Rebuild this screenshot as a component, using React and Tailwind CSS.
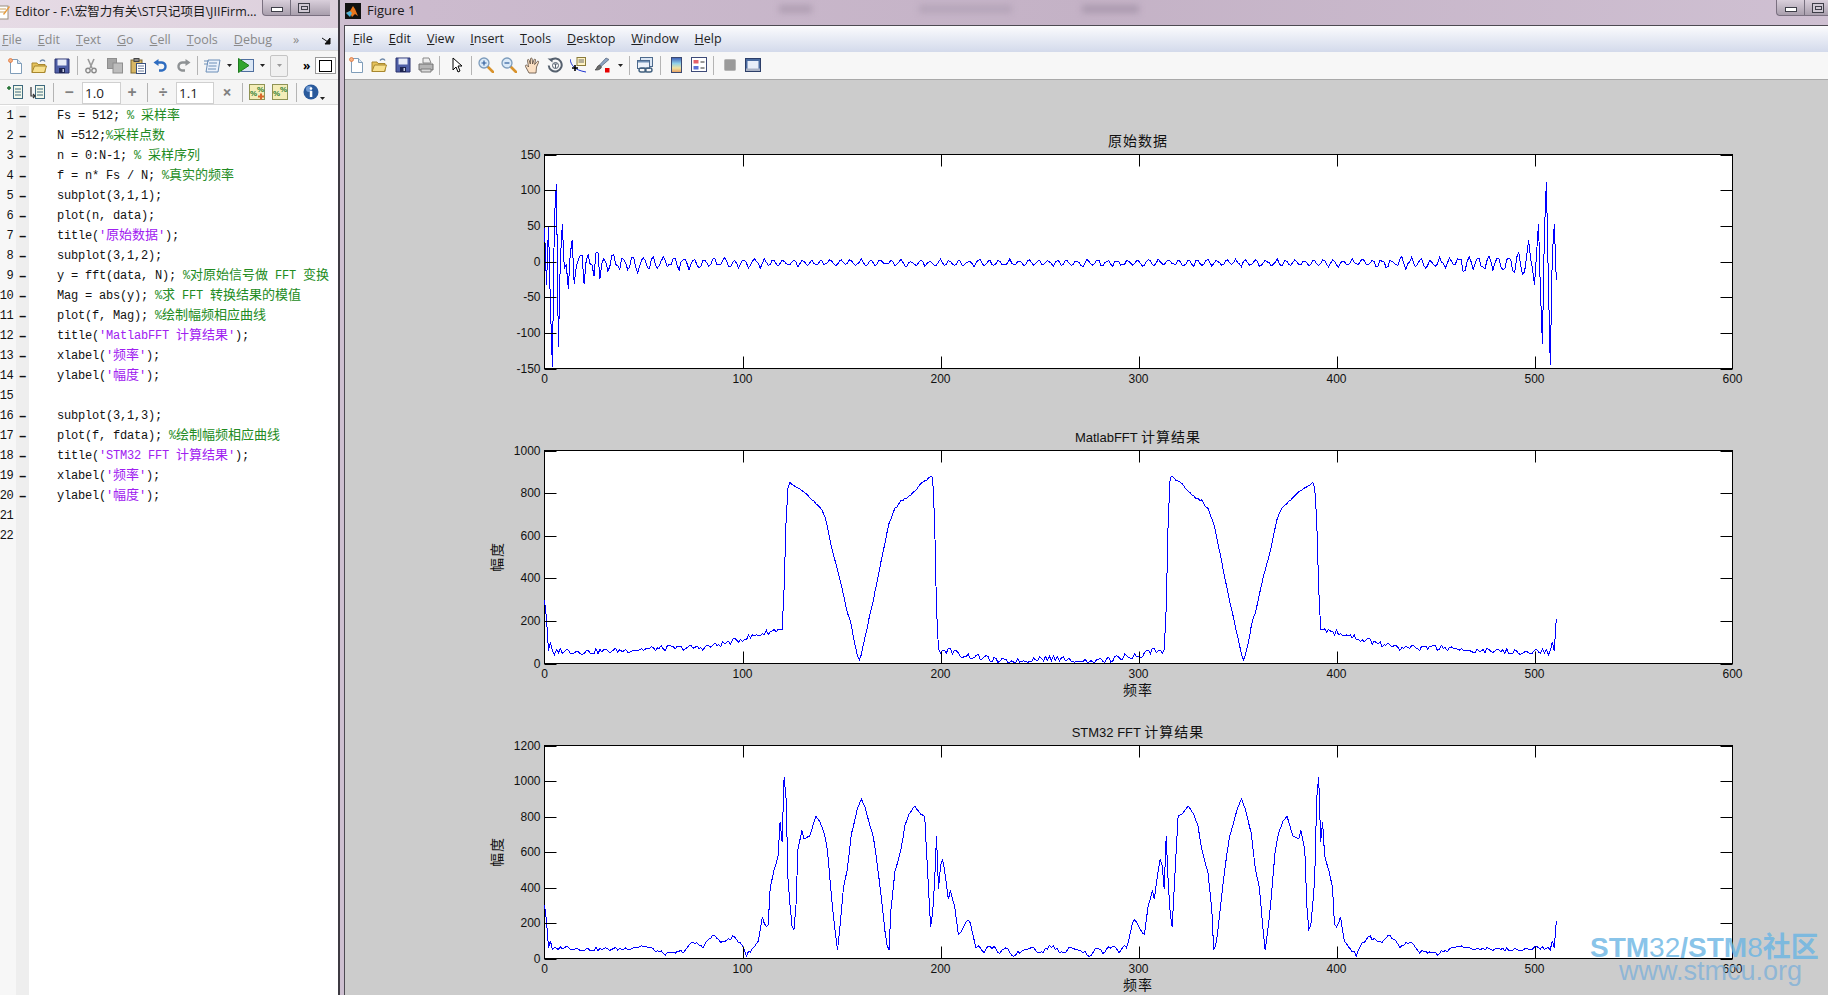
import React from "react";

const mono = "font-['Liberation_Mono','Noto_Sans_CJK_SC',monospace]";
const ui = "font-['Open_Sans','Noto_Sans_CJK_SC',sans-serif]";
const CJK = /([\u4e00-\u9fff]+)/;

// fake but repeatable noise for the curves
function rnd(i, seed) {
  const v = Math.sin(i * 12.9898 + seed * 78.233) * 43758.5453;
  return v - Math.floor(v);
}

function interp(points, i) {
  for (let k = 0; k < points.length - 1; k++) {
    const [a, va] = points[k];
    const [b, vb] = points[k + 1];
    if (i >= a && i <= b) return va + ((vb - va) * (i - a)) / (b - a);
  }
  return points[points.length - 1][1];
}

const matlabPoints = [
  [0, 300], [1, 210], [2, 60], [3, 100], [4, 60], [5, 30], [6, 60], [10, 60], [20, 55], [40, 62],
  [60, 72], [80, 75], [90, 92], [100, 115], [110, 140], [120, 165], [121, 350], [122, 670], [123, 830],
  [124, 845], [130, 810], [135, 770], [140, 720], [142, 680], [145.5, 520], [148.5, 420], [151.5, 300],
  [154.5, 200], [157.5, 50], [158.5, 15], [159.5, 20], [161.5, 120], [163.5, 180], [166.5, 320], [170.5, 500],
  [173.5, 640], [176.5, 720], [180, 765], [185, 790], [190, 840], [195, 880], [196.5, 875], [197, 670],
  [198, 260], [198.5, 60], [205, 62], [210, 40], [220, 30], [230, 10], [240, 10], [250, 25], [256, 22],
];

const stmPoints = [
  [0, 300], [1, 210], [2, 60], [3, 100], [4, 50], [10, 65], [20, 50], [40, 55], [50, 70], [60, 30],
  [62, 25], [70, 40], [75, 90], [80, 70], [85, 130], [90, 90], [95, 120], [100, 80], [102, 20],
  [105, 50], [108, 100], [110, 235], [112, 170], [113, 200], [114, 400], [116, 500], [118, 580],
  [119, 770], [120, 660], [121, 1020], [122, 900], [123, 450], [124, 300], [125, 180], [126, 160],
  [127, 300], [128, 610], [130, 720], [131, 670], [134, 690], [137, 800], [139, 770], [141.5, 700],
  [143, 600], [144.5, 400], [146, 220], [148, 40], [149.5, 200], [151, 400], [153, 510], [155, 700],
  [158, 840], [160, 900], [162, 850], [164, 760], [166, 690], [168.5, 500], [170.5, 300], [172.5, 100],
  [174, 40], [175, 280], [177, 490], [180, 610], [182, 750], [184, 810], [187, 860], [190, 810],
  [192, 800], [193, 600], [194.5, 280], [195, 180], [196.5, 300], [198, 690], [199, 390], [200.5, 590],
  [202.5, 470], [204, 330], [205, 380], [207, 300], [209, 130], [213, 210], [215, 210], [218, 55],
  [220, 70], [222, 30], [225, 75], [230, 30], [234, 60], [236, 15], [246, 70], [250, 30], [256, 70],
];

const dataStart = [47, -33, 50, -60, -148, 60, 108, -120, 0, 52, -10, -5, -38, 10, 30, -32, -8, 2, 8, 8, -32, 0, 10, -3, -5, -20, 12, 12, -25];
const dataEnd = { 497: 30, 498: 5, 499: -10, 500: -33, 501: 10, 502: 53, 503: -40, 504: -115, 505: 40, 506: 112, 507: -30, 508: -145, 509: 10, 510: 52, 511: -26 };

function spectrum(points, noiseSize) {
  const out = [];
  for (let i = 0; i < 512; i++) {
    const d = i <= 256 ? i : 512 - i;
    let v = interp(points, d);
    if (d > 4) v += (rnd(d, 3) - 0.5) * noiseSize * (v < 300 ? 1 : 0.4);
    out.push(Math.max(v, 6));
  }
  return out;
}

function timeSignal() {
  const out = [];
  let phase = 0;
  for (let i = 0; i < 512; i++) {
    phase += (2 * Math.PI) / (4 + rnd(i, 2) * 2);
    if (i < dataStart.length) out.push(dataStart[i]);
    else if (dataEnd[i] !== undefined) out.push(dataEnd[i]);
    else {
      const d = Math.min(i, 512 - i);
      const amp = 4 + 16 * Math.exp(-d / 45);
      out.push(-2 + amp * Math.sin(phase) * (0.5 + rnd(i, 9) * 0.7) + (rnd(i, 7) - 0.5) * amp * 0.7);
    }
  }
  return out;
}

const AX_L = 199.5;
const AX_W = 1188;
const AX_T = 44.5;

function Plot({ boxH, yMin, yMax, yTicks, data, title, xlabel, ylabel, outerH }) {
  const sx = (v) => AX_L + (v / 600) * AX_W;
  const sy = (v) => AX_T + boxH - ((v - yMin) / (yMax - yMin)) * boxH;
  const points = data.map((v, i) => `${sx(i).toFixed(1)},${sy(v).toFixed(1)}`).join(" ");
  const bottom = AX_T + boxH;
  const labelFont = "'Liberation Sans', sans-serif";
  const cjkFont = "'Noto Sans CJK SC', sans-serif";
  return (
    <svg width="1483" height={outerH} className="block shrink-0" style={{ height: outerH }}>
      <rect x={AX_L} y={AX_T} width={AX_W} height={boxH} fill="#fff" stroke="#000" />
      <polyline points={points} fill="none" stroke="#0000ff" strokeWidth="1" shapeRendering="crispEdges" />
      {[100, 200, 300, 400, 500].map((v) => (
        <g key={v} stroke="#000">
          <line x1={Math.round(sx(v)) + 0.5} x2={Math.round(sx(v)) + 0.5} y1={AX_T} y2={AX_T + 12} />
          <line x1={Math.round(sx(v)) + 0.5} x2={Math.round(sx(v)) + 0.5} y1={bottom} y2={bottom - 12} />
        </g>
      ))}
      {yTicks.map((v) => (
        <g key={v} stroke="#000">
          <line x1={AX_L} x2={AX_L + 12} y1={Math.round(sy(v)) + 0.5} y2={Math.round(sy(v)) + 0.5} />
          <line x1={AX_L + AX_W} x2={AX_L + AX_W - 12} y1={Math.round(sy(v)) + 0.5} y2={Math.round(sy(v)) + 0.5} />
        </g>
      ))}
      {[0, 100, 200, 300, 400, 500, 600].map((v) => (
        <text key={v} x={sx(v)} y={bottom + 14} textAnchor="middle" fontSize="12" fill="#111" fontFamily={labelFont}>
          {v}
        </text>
      ))}
      {yTicks.map((v) => (
        <text key={v} x={195.5} y={sy(v) + 4} textAnchor="end" fontSize="12" fill="#111" fontFamily={labelFont}>
          {v}
        </text>
      ))}
      <text x={793} y={AX_T - 9} textAnchor="middle" fill="#111">
        {title
          .split(CJK)
          .filter(Boolean)
          .map((part, i) =>
            CJK.test(part) ? (
              <tspan key={i} fontSize="14" letterSpacing="1" fontFamily={cjkFont}>
                {part}
              </tspan>
            ) : (
              <tspan key={i} fontSize="13" fontFamily={labelFont}>
                {part}
              </tspan>
            ),
          )}
      </text>
      {xlabel && (
        <text x={793} y={bottom + 31} textAnchor="middle" fontSize="14" letterSpacing="1" fill="#111" fontFamily={cjkFont}>
          {xlabel}
        </text>
      )}
      {ylabel && (
        <text
          transform={`translate(157 ${AX_T + boxH / 2}) rotate(-90)`}
          textAnchor="middle"
          fontSize="14"
          letterSpacing="1"
          fill="#111"
          fontFamily={cjkFont}>
          {ylabel}
        </text>
      )}
    </svg>
  );
}

// toolbar drawings
function Doc() {
  return (
    <svg width="16" height="16" viewBox="0 0 16 16">
      <path d="M2.5 1.5h7l4 4v10h-11z" fill="#fff" stroke="#7f9db9" />
      <path d="M9.5 1.5v4h4" fill="#d6e4f2" stroke="#7f9db9" />
      <circle cx="2.5" cy="2.5" r="2" fill="#f4b183" stroke="#e06a2c" strokeWidth="0.7" />
    </svg>
  );
}

function Folder() {
  return (
    <svg width="16" height="16" viewBox="0 0 16 16">
      <path d="M1 5h5l1 1.500h7v8H1z" fill="#e6c25a" stroke="#a8872e" />
      <path d="M1 14.500 3.500 8h12l-2 6.500z" fill="#f7e08e" stroke="#a8872e" />
      <path d="M9 3.500c1.500-2 4-2 5 0" fill="none" stroke="#6d87a8" strokeWidth="1.300" />
    </svg>
  );
}

function Disk() {
  return (
    <svg width="16" height="16" viewBox="0 0 16 16">
      <path d="M1 1h14v14H1z" fill="#4f5fa6" stroke="#2c3570" />
      <rect x="3.500" y="1.500" width="9" height="6" fill="#e8ecf7" />
      <rect x="5" y="10" width="6" height="5" fill="#1d2450" />
      <rect x="8.500" y="11" width="1.500" height="3" fill="#c6cbe0" />
    </svg>
  );
}

function Printer() {
  return (
    <svg width="16" height="16" viewBox="0 0 16 16">
      <path d="M5 1h6l2 5H5z" fill="#eee" stroke="#888" />
      <path d="M1 7h14v6H1z" fill="#b5b5b5" stroke="#707070" />
      <path d="M3 12h10v3H3z" fill="#dcdcdc" stroke="#7a7a7a" />
    </svg>
  );
}

function Cursor() {
  return (
    <svg width="11" height="16" viewBox="0 0 11 16">
      <path d="M1 1v12l3-3 2 5 2-1-2-5h4z" fill="#fff" stroke="#000" />
    </svg>
  );
}

function Zoom({ plus }) {
  return (
    <svg width="16" height="16" viewBox="0 0 16 16">
      <path d="M9.500 9.500 15 15" stroke="#d9932c" strokeWidth="2.600" strokeLinecap="round" />
      <circle cx="6" cy="6" r="5" fill="#dbeaf8" stroke="#7d9cbc" strokeWidth="1.300" />
      <path d={plus ? "M3.500 6h5M6 3.500v5" : "M3.500 6h5"} stroke="#2f5d9b" strokeWidth="1.200" />
    </svg>
  );
}

function Hand() {
  return (
    <svg width="17" height="17" viewBox="0 0 17 17">
      <path
        d="M5 16 1.500 9.500c-.6-1.200.8-2 1.700-1L4.500 10 3.500 3.500c-.2-1.200 1.300-1.500 1.600-.3L6.300 7 6.500 2c0-1.300 1.600-1.300 1.700 0l.4 5L10 2.800c.4-1.200 1.800-.8 1.500.4L10.600 7.500l2.600-3c.8-.9 1.900 0 1.300 1L12.500 10 12 16z"
        fill="#fbe0c4"
        stroke="#5b4a3c"
        strokeWidth="0.800"
      />
    </svg>
  );
}

function Rotate() {
  return (
    <svg width="16" height="16" viewBox="0 0 16 16">
      <path d="M3.500 3.500a6.500 6.500 0 1 1-1.800 5" fill="none" stroke="#55606e" strokeWidth="2" />
      <path d="M0.500 1.500h5v4z" fill="#55606e" />
      <circle cx="8.500" cy="8.500" r="3" fill="none" stroke="#55606e" />
      <path d="M7 7h3M8.500 7v4" stroke="#55606e" />
    </svg>
  );
}

function DataCursor() {
  return (
    <svg width="16" height="16" viewBox="0 0 16 16">
      <rect x="7" y="0.500" width="8.500" height="8" fill="#fff3c4" stroke="#8a7b3b" />
      <path d="M8.500 3h5.500M8.500 5h5.500" stroke="#6a6a6a" />
      <path d="M0 2c1 6 4 11 16 13" fill="none" stroke="#1f35d0" />
      <path d="M5 8v6M2 11h6" stroke="#000" strokeWidth="1.600" />
    </svg>
  );
}

function Brush() {
  return (
    <svg width="16" height="16" viewBox="0 0 16 16">
      <path d="M12 1 15 2.500 7 9.500 5.500 8z" fill="#8fa6c4" stroke="#4f5f77" strokeWidth="0.700" />
      <path d="M5.500 8 7.500 10c-.5 2-3 3.500-6.500 3 2-1 1.500-4 4.500-5z" fill="#6b6b6b" stroke="#333" strokeWidth="0.600" />
      <rect x="11" y="11" width="4.500" height="4.500" fill="#e60000" />
    </svg>
  );
}

function LinkIcon() {
  return (
    <svg width="16" height="16" viewBox="0 0 16 16">
      <rect x="3.500" y="0.500" width="12" height="9" fill="#dce7f4" stroke="#4d6a8d" />
      <rect x="0.500" y="3.500" width="12" height="8" fill="#eef3fa" stroke="#4d6a8d" />
      <path d="M1 4h11v1.500H1z" fill="#6f8fb5" />
      <rect x="2" y="11" width="7" height="4" rx="2" fill="none" stroke="#41607f" strokeWidth="1.400" />
      <rect x="8" y="11" width="7" height="4" rx="2" fill="none" stroke="#41607f" strokeWidth="1.400" />
    </svg>
  );
}

function Colorbar() {
  return (
    <svg width="11" height="16" viewBox="0 0 11 16">
      <defs>
        <linearGradient id="cb" x1="0" y1="0" x2="0" y2="1">
          <stop offset="0" stopColor="#3b5bb5" />
          <stop offset="0.400" stopColor="#8fd0e8" />
          <stop offset="0.700" stopColor="#f1e3a0" />
          <stop offset="1" stopColor="#e59a5c" />
        </linearGradient>
      </defs>
      <rect x="0.500" y="0.500" width="10" height="15" fill="url(#cb)" stroke="#3c4a70" />
    </svg>
  );
}

function Legend() {
  return (
    <svg width="16" height="16" viewBox="0 0 16 16">
      <rect x="0.500" y="0.500" width="15" height="14" fill="#fff" stroke="#3d4a78" />
      <rect x="2.500" y="3" width="5" height="3.500" fill="#e4606a" />
      <rect x="2.500" y="9" width="5" height="3.500" fill="#5a6fd8" />
      <path d="M9.500 5h4M9.500 11h4" stroke="#333" />
    </svg>
  );
}

function GraySquare() {
  return (
    <svg width="12" height="12" viewBox="0 0 12 12">
      <rect x="0.500" y="0.500" width="11" height="11" rx="1" fill="#9a9a9a" stroke="#b5b5b5" />
    </svg>
  );
}

function PlotTools() {
  return (
    <svg width="16" height="16" viewBox="0 0 16 16">
      <rect x="0.500" y="1.500" width="15" height="13" fill="#e8eef8" stroke="#2c3e68" />
      <rect x="1" y="2" width="14" height="2" fill="#4a6ba0" />
      <rect x="1" y="4" width="1.500" height="10" fill="#4a6ba0" />
      <rect x="13.500" y="4" width="1.500" height="10" fill="#4a6ba0" />
      <rect x="1" y="11.500" width="14" height="2.500" fill="#a9b2c5" />
    </svg>
  );
}

function Cut() {
  return (
    <svg width="12" height="16" viewBox="0 0 12 16">
      <path d="M3 1l4 9M9 1 5 10" stroke="#9a9a9a" strokeWidth="1.600" />
      <circle cx="3" cy="12.500" r="2.200" fill="none" stroke="#8a8a8a" strokeWidth="1.400" />
      <circle cx="9" cy="12.500" r="2.200" fill="none" stroke="#8a8a8a" strokeWidth="1.400" />
    </svg>
  );
}

function Copy() {
  return (
    <svg width="16" height="16" viewBox="0 0 16 16">
      <rect x="0.500" y="0.500" width="9" height="10" fill="#a5a5a5" stroke="#8e8e8e" />
      <rect x="6" y="5" width="9.500" height="10" fill="#bdbdbd" stroke="#8e8e8e" />
    </svg>
  );
}

function Paste() {
  return (
    <svg width="16" height="16" viewBox="0 0 16 16">
      <rect x="1" y="2" width="11" height="13" fill="#d8b765" stroke="#7e6a33" />
      <rect x="4" y="0.500" width="5" height="3" fill="#8a8a8a" stroke="#444" />
      <rect x="6.500" y="5.500" width="9" height="10" fill="#fff" stroke="#39507c" />
      <path d="M8 8h6M8 10.500h6M8 13h6" stroke="#6f7f9e" />
    </svg>
  );
}

function Undo() {
  return (
    <svg width="14" height="14" viewBox="0 0 14 14">
      <path d="M4 3.500h4a4 4 0 0 1 1 8H6" fill="none" stroke="#2e6cc0" strokeWidth="2.400" />
      <path d="M5.500 0v7L0.500 3.500z" fill="#2e6cc0" />
    </svg>
  );
}

function Redo() {
  return (
    <svg width="14" height="14" viewBox="0 0 14 14">
      <path d="M10 3.500H6a4 4 0 0 0-1 8h3" fill="none" stroke="#8e9294" strokeWidth="2.400" />
      <path d="M8.500 0v7l5-3.500z" fill="#8e9294" />
    </svg>
  );
}

function Publish() {
  return (
    <svg width="17" height="14" viewBox="0 0 17 14">
      <path d="M4 1h12l-2 12H2z" fill="#eaf1fb" stroke="#6d8fb8" />
      <path d="M5 4h8M4.500 7h8M4 10h8" stroke="#6d8fb8" />
      <path d="M0 2h5M0 5h4" stroke="#6d8fb8" />
    </svg>
  );
}

function Run() {
  return (
    <svg width="16" height="15" viewBox="0 0 16 15">
      <rect x="3.500" y="1.500" width="12" height="12" fill="#dbe7f5" stroke="#4f6f9f" />
      <path d="M0.500 0.500 11 7.500 0.500 14.500z" fill="#2fa52f" stroke="#1f7a1f" />
    </svg>
  );
}

function Caret({ color = "#222" }) {
  return (
    <svg width="5" height="3" viewBox="0 0 5 3">
      <path d="M0 0h5L2.500 3z" fill={color} />
    </svg>
  );
}

function CellInsert({ up }) {
  return (
    <svg width="16" height="16" viewBox="0 0 16 16">
      <rect x="6.500" y="1.500" width="9" height="13" fill="#f3f8ea" stroke="#3f6a7f" />
      <path d="M8 5h6M8 8h6M8 11h6" stroke="#3f6a7f" />
      {up ? (
        <path d="M0 4h4M2 2v4" stroke="#1a6b2a" strokeWidth="1.400" />
      ) : (
        <path d="M2 3v9h3M4 10l2 2-2 2" fill="none" stroke="#333" strokeWidth="1.200" />
      )}
    </svg>
  );
}

function CellPercent({ plus }) {
  return (
    <svg width="16" height="16" viewBox="0 0 16 16">
      <rect x="0.500" y="0.500" width="15" height="15" fill="#f4edb8" stroke="#8f9355" />
      <text x="1" y="12" fontSize="8" fontWeight="700" fill="#2e7d32" fontFamily="'Liberation Sans', sans-serif">%</text>
      <text x="8" y="8" fontSize="8" fontWeight="700" fill="#2e7d32" fontFamily="'Liberation Sans', sans-serif">%</text>
      {plus && <path d="M12 9.500v6M9 12.500h6" stroke="#d8682a" strokeWidth="2" />}
    </svg>
  );
}

function Info() {
  return (
    <svg width="16" height="16" viewBox="0 0 16 16">
      <circle cx="8" cy="8" r="7.500" fill="#2a5a9c" />
      <circle cx="6" cy="5" r="3" fill="#6f9ad3" />
      <circle cx="8" cy="4.500" r="1.300" fill="#fff" />
      <rect x="6.800" y="7" width="2.500" height="6" fill="#fff" />
    </svg>
  );
}

function Sep({ className }) {
  return <div className={`h-[19px] w-px shrink-0 bg-[#b4b4b4] ${className}`} />;
}

function Menu({ items, className, children }) {
  return (
    <div className={`flex items-center ${ui} ${className}`}>
      {items.map(([first, rest], i) => (
        <span key={i}>
          <u>{first}</u>
          {rest}
        </span>
      ))}
      {children}
    </div>
  );
}

function WindowButtons({ className }) {
  return (
    <div className={`flex h-[16px] shrink-0 items-center rounded-bl-[4px] border-b border-l border-[#7a7080] bg-gradient-to-b from-[#d9cfdb] to-[#a99fad] ${className}`}>
      <div className="flex w-[27px] justify-center pt-[3px]">
        <div className="h-[5px] w-[12px] border border-[#3e3e48] bg-white" />
      </div>
      <div className="h-full w-px bg-[#77707f]" />
      <div className="pl-[7px]">
        <div className="flex h-[10px] w-[12px] items-center justify-center border border-[#3e3e48] bg-[#cfc8d3]">
          <div className="h-[4px] w-[7px] border border-[#3e3e48]" />
        </div>
      </div>
    </div>
  );
}

const green = "text-[#228b22]";
const purple = "text-[#a020f0]";

const code = [
  ["Fs = 512; ", ["% 采样率", green]],
  ["N =512;", ["%采样点数", green]],
  ["n = 0:N-1; ", ["% 采样序列", green]],
  ["f = n* Fs / N; ", ["%真实的频率", green]],
  ["subplot(3,1,1);"],
  ["plot(n, data);"],
  ["title(", ["'原始数据'", purple], ");"],
  ["subplot(3,1,2);"],
  ["y = fft(data, N); ", ["%对原始信号做 FFT 变换", green]],
  ["Mag = abs(y); ", ["%求 FFT 转换结果的模值", green]],
  ["plot(f, Mag); ", ["%绘制幅频相应曲线", green]],
  ["title(", ["'MatlabFFT 计算结果'", purple], ");"],
  ["xlabel(", ["'频率'", purple], ");"],
  ["ylabel(", ["'幅度'", purple], ");"],
  null,
  ["subplot(3,1,3);"],
  ["plot(f, fdata); ", ["%绘制幅频相应曲线", green]],
  ["title(", ["'STM32 FFT 计算结果'", purple], ");"],
  ["xlabel(", ["'频率'", purple], ");"],
  ["ylabel(", ["'幅度'", purple], ");"],
  null,
  null,
];

function CodeText({ text }) {
  return text
    .split(CJK)
    .filter(Boolean)
    .map((part, i) =>
      CJK.test(part) ? (
        <span key={i} className="text-[13px] tracking-[0px]">
          {part}
        </span>
      ) : (
        <span key={i}>{part}</span>
      ),
    );
}

function CodeRow({ n, parts }) {
  return (
    <div className={`flex h-[20px] items-center ${mono} text-[12px] tracking-[-0.2px] text-[#111]`}>
      <div className="flex h-full w-[16px] shrink-0 items-center justify-end bg-[#f7f7f7] pr-[3px] tracking-[-0.6px]">{n}</div>
      <div className="flex h-full w-[13px] shrink-0 items-center justify-center bg-[#eeeeee] text-[14px] font-bold">{parts ? "–" : ""}</div>
      <div className="whitespace-pre pl-[28px]">
        {parts &&
          parts.map((p, i) =>
            typeof p === "string" ? (
              <CodeText key={i} text={p} />
            ) : (
              <span key={i} className={p[1]}>
                <CodeText text={p[0]} />
              </span>
            ),
          )}
      </div>
    </div>
  );
}

const symbol = `w-[10px] text-center text-[16px] font-bold leading-none text-[#808080] ${ui}`;
const numberBox = `flex h-[22px] items-center self-end border border-[#d0d0d0] bg-white pl-[2px] text-[13.500px] text-[#222] ${ui}`;

function EditorPanel() {
  return (
    <div className="flex w-[338px] shrink-0 flex-col">
      <div className="flex h-[28px] items-start bg-gradient-to-r from-[#e6dbe5] to-[#dccfdc]">
        <svg width="11" height="18" viewBox="0 0 11 18" className="mt-[3px] shrink-0">
          <rect x="-4" y="3" width="12" height="13" fill="#fff" stroke="#9a8f80" />
          <path d="M-2 6h8M-2 9h8" stroke="#c8a060" />
          <path d="M3 11 9 3l1 1-6 8z" fill="#e89b3c" />
        </svg>
        <div className={`ml-[4px] mt-[3px] w-[240px] shrink-0 whitespace-nowrap text-[12.500px] leading-[18px] text-[#1a1a1a] ${ui}`}>Editor - F:\宏智力有关\ST只记项目\JIIFirm...</div>
        <WindowButtons className="ml-[7px] w-[68px]" />
      </div>
      <Menu
        className="h-[22px] gap-[16px] bg-gradient-to-b from-[#f5f4f7] to-[#d9dfee] pl-[2px] pt-[3px] text-[12.500px] text-[#8a8a8a]"
        items={[
          ["F", "ile"],
          ["E", "dit"],
          ["T", "ext"],
          ["G", "o"],
          ["C", "ell"],
          ["T", "ools"],
          ["D", "ebug"],
        ]}>
        <span className="ml-[5px]">»</span>
        <svg width="9" height="8" viewBox="0 0 9 8" className="ml-[7px]">
          <path d="M0 1l6 4M8 1v6H3z" fill="#111" stroke="#111" strokeWidth="1" />
        </svg>
      </Menu>
      <div className="flex h-[29px] items-center border-t border-[#d9d9d9] bg-[#f5f5f5] pl-[8px] pt-[1px]">
        <Doc />
        <div className="ml-[7px]"><Folder /></div>
        <div className="ml-[7px]"><Disk /></div>
        <Sep className="ml-[7px]" />
        <div className="ml-[7px]"><Cut /></div>
        <div className="ml-[10px]"><Copy /></div>
        <div className="ml-[7px]"><Paste /></div>
        <div className="ml-[7px]"><Undo /></div>
        <div className="ml-[10px]"><Redo /></div>
        <Sep className="ml-[6px]" />
        <div className="ml-[6px]"><Publish /></div>
        <div className="ml-[6px]"><Caret /></div>
        <div className="ml-[6px]"><Run /></div>
        <div className="ml-[6px]"><Caret /></div>
        <div className="ml-[5px] flex h-[22px] w-[18px] items-center justify-center rounded-[2px] border border-[#c4c4c4] bg-[#f0f0f0]">
          <Caret color="#999" />
        </div>
        <div className={`ml-[15px] text-[12px] font-bold leading-none ${ui}`}>»</div>
        <div className="ml-[5px] flex h-[17px] w-[21px] items-center justify-center border border-[#999] bg-white">
          <div className="h-[12px] w-[13px] border border-black" />
        </div>
      </div>
      <div className="flex h-[26px] items-center border-y border-[#d9d9d9] bg-[#f5f5f5] pl-[7px]">
        <CellInsert up />
        <div className="ml-[6px]"><CellInsert /></div>
        <Sep className="ml-[8px]" />
        <div className={`ml-[10px] ${symbol}`}>−</div>
        <div className={`ml-[8px] w-[39px] ${numberBox}`}>1.0</div>
        <div className={`ml-[6px] ${symbol}`}>+</div>
        <Sep className="ml-[10px]" />
        <div className={`ml-[10px] ${symbol}`}>÷</div>
        <div className={`ml-[8px] w-[38px] ${numberBox}`}>1.1</div>
        <div className={`ml-[8px] ${symbol}`}>×</div>
        <Sep className="ml-[10px]" />
        <div className="ml-[6px]"><CellPercent plus /></div>
        <div className="ml-[7px]"><CellPercent /></div>
        <Sep className="ml-[8px]" />
        <div className="ml-[6px]"><Info /></div>
        <div className="ml-[1px] mt-[12px]"><Caret /></div>
      </div>
      <div className="flex flex-1 flex-col bg-white pt-[1px]">
        {code.map((parts, i) => (
          <CodeRow key={i} n={i + 1} parts={parts} />
        ))}
        <div className="flex flex-1">
          <div className="w-[16px] bg-[#f7f7f7]" />
          <div className="w-[13px] bg-[#eeeeee]" />
        </div>
      </div>
    </div>
  );
}

function FigurePanel() {
  const data1 = timeSignal();
  const data2 = spectrum(matlabPoints, 26);
  const data3 = spectrum(stmPoints, 20);
  return (
    <div className="flex min-w-0 flex-1 flex-col">
      <div className="flex h-[25px] items-start bg-gradient-to-r from-[#cdbccf] via-[#c4b2c6] to-[#cfc0d2]">
        <svg width="16" height="16" viewBox="0 0 16 16" className="ml-[1px] mt-[3px] shrink-0">
          <rect width="16" height="16" fill="#111" />
          <path d="M1 10 5 8 8 3l2 3 3 7-3-2-3 3-2-4z" fill="#e8771e" />
          <path d="M1 10 5 8l2 2-2 4z" fill="#4fb3d9" />
        </svg>
        <div className={`ml-[6px] mt-[1px] w-[60px] text-[13px] text-[#1a1a1a] ${ui}`}>Figure 1</div>
        {/* the original title is blurred out in the screenshot */}
        <div className="ml-[352px] mt-[4px] flex h-[10px] w-[385px] items-center blur-[3px]">
          <div className="h-[8px] w-[33px] bg-[#b09fb3]" />
          <div className="ml-[107px] h-[8px] w-[93px] bg-[#b5a5b9]" />
          <div className="ml-[70px] h-[8px] w-[57px] bg-[#ab9aaf]" />
        </div>
        <WindowButtons className="ml-auto w-[52px]" />
      </div>
      <div className="flex flex-1 flex-col overflow-hidden border-l border-t border-[#4d4a52]">
        <Menu
          className="h-[26px] shrink-0 gap-[16px] bg-gradient-to-b from-[#fbfbfd] to-[#d3daeb] pl-[8px] text-[12.500px] text-[#1e1e1e]"
          items={[
            ["F", "ile"],
            ["E", "dit"],
            ["V", "iew"],
            ["I", "nsert"],
            ["T", "ools"],
            ["D", "esktop"],
            ["W", "indow"],
            ["H", "elp"],
          ]}
        />
        <div className="flex h-[28px] shrink-0 items-center border-b border-[#a9a9a9] bg-[#f7f7f7] pb-[1px] pl-[4px]">
          <Doc />
          <div className="ml-[6px]"><Folder /></div>
          <div className="ml-[8px]"><Disk /></div>
          <div className="ml-[7px]"><Printer /></div>
          <Sep className="ml-[5px]" />
          <div className="ml-[12px]"><Cursor /></div>
          <Sep className="ml-[8px]" />
          <div className="ml-[6px]"><Zoom plus /></div>
          <div className="ml-[7px]"><Zoom /></div>
          <div className="ml-[7px]"><Hand /></div>
          <div className="ml-[6px]"><Rotate /></div>
          <div className="ml-[7px]"><DataCursor /></div>
          <div className="ml-[8px]"><Brush /></div>
          <div className="ml-[8px]"><Caret /></div>
          <Sep className="ml-[6px]" />
          <div className="ml-[7px]"><LinkIcon /></div>
          <Sep className="ml-[7px]" />
          <div className="ml-[10px]"><Colorbar /></div>
          <div className="ml-[9px]"><Legend /></div>
          <Sep className="ml-[6px]" />
          <div className="ml-[10px]"><GraySquare /></div>
          <div className="ml-[9px]"><PlotTools /></div>
        </div>
        <div className="flex flex-1 flex-col bg-[#cccccc] pt-[30px]">
          <Plot outerH={296} boxH={214} yMin={-150} yMax={150} yTicks={[-150, -100, -50, 0, 50, 100, 150]} data={data1} title="原始数据" />
          <Plot outerH={295} boxH={213} yMin={0} yMax={1000} yTicks={[0, 200, 400, 600, 800, 1000]} data={data2} title="MatlabFFT 计算结果" xlabel="频率" ylabel="幅度" />
          <Plot outerH={294} boxH={213} yMin={0} yMax={1200} yTicks={[0, 200, 400, 600, 800, 1000, 1200]} data={data3} title="STM32 FFT 计算结果" xlabel="频率" ylabel="幅度" />
        </div>
      </div>
    </div>
  );
}

export default function App() {
  return (
    <div className="relative flex h-[995px] w-[1828px] overflow-hidden bg-[#c9b9cb]">
      <EditorPanel />
      <div className="w-[6px] shrink-0 border-l-2 border-[#3d3a42] bg-[#cdbfd0]" />
      <FigurePanel />
      <div className="pointer-events-none absolute left-[1590px] top-[934px] flex flex-col font-['Liberation_Sans','Noto_Sans_CJK_SC',sans-serif]">
        <div className="whitespace-nowrap text-[28px] font-bold leading-[28px] text-[#68b4e4]/80">
          STM<span className="font-normal">32</span>/STM<span className="font-normal">8</span>社区
        </div>
        <div className="-mt-[3px] ml-[29px] whitespace-nowrap text-[27px] leading-[24px] text-[#7fb0d8]/80">www.stmcu.org</div>
      </div>
    </div>
  );
}
